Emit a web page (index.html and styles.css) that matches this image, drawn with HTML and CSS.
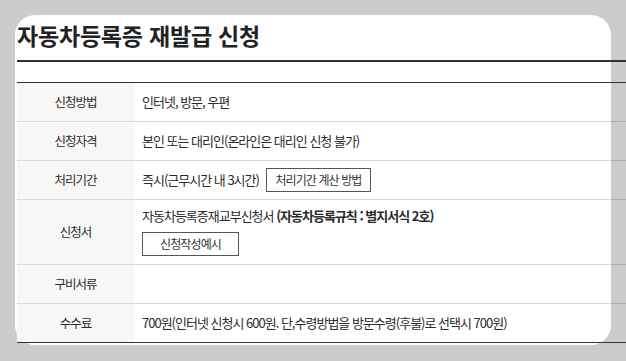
FILE: index.html
```html
<!DOCTYPE html>
<html lang="ko">
<head>
<meta charset="utf-8">
<title>자동차등록증 재발급 신청</title>
<link rel="stylesheet" href="styles.css">
</head>
<body>
  <div class="card">
    <h1 class="title">자동차등록증 재발급 신청</h1>
    <div class="sheet">
      <div class="grid">
        <div class="row">
          <div class="label">신청방법</div>
          <div class="value">인터넷, 방문, 우편</div>
        </div>
        <div class="row">
          <div class="label">신청자격</div>
          <div class="value">본인 또는 대리인(온라인은 대리인 신청 불가)</div>
        </div>
        <div class="row">
          <div class="label">처리기간</div>
          <div class="value">즉시(근무시간 내 3시간) <button class="btn btn-inline" type="button">처리기간 계산 방법</button></div>
        </div>
        <div class="row row-tall">
          <div class="label">신청서</div>
          <div class="value value-stack">
            <p class="line">자동차등록증재교부신청서 <strong>(자동차등록규칙 : 별지서식 2호)</strong></p>
            <button class="btn btn-block" type="button">신청작성예시</button>
          </div>
        </div>
        <div class="row">
          <div class="label">구비서류</div>
          <div class="value"></div>
        </div>
        <div class="row">
          <div class="label">수수료</div>
          <div class="value">700원(인터넷 신청시 600원. 단,수령방법을 방문수령(후불)로 선택시 700원)</div>
        </div>
      </div>
    </div>
  </div>
</body>
</html>
```
FILE: styles.css
```css
html, body {
  margin: 0;
  background: #cccccc;
  overflow: hidden;
}

body {
  padding: 15px;
  font-family: "Noto Sans CJK KR", "Noto Sans", sans-serif;
  color: #333;
}

.card {
  width: 596px;
  height: 330px;
  box-sizing: border-box;
  padding-left: 2px;
  background: #fff;
  border-radius: 20px;
}

.title {
  margin: 0 0 13px;
  padding-top: 8px;
  font-size: 23px;
  line-height: 24px;
  font-weight: 700;
  letter-spacing: -0.2px;
  color: #222;
}

/* the sheet runs wider than the card, past the window edge */
.sheet {
  width: 640px;
  border-top: 2px solid #333;
  padding-top: 20px;
}

.grid {
  border-top: 1px solid #333;
  border-bottom: 1px solid #333;
}

.row {
  display: flex;
  min-height: 39px;
  box-sizing: border-box;
  border-bottom: 1px solid rgba(0, 0, 0, 0.15);
  font-size: 13px;
  letter-spacing: -1px;
  line-height: 18px;
  color: #2b2b2b;
}

.row:last-child {
  border-bottom: 0;
  min-height: 38px;
}

.row-tall {
  min-height: 65px;
}

.label {
  flex: 0 0 117px;
  display: flex;
  align-items: center;
  justify-content: center;
  background: #f7f7f7;
  font-size: 12.5px;
  letter-spacing: -1px;
}

.value {
  flex: 1;
  display: flex;
  align-items: center;
  padding: 0 8px;
}

.value-stack {
  flex-direction: column;
  align-items: flex-start;
  justify-content: flex-start;
  padding-top: 7px;
}

.line {
  margin: 0 0 7px;
}

.line strong {
  font-weight: 700;
}

.btn {
  height: 24px;
  box-sizing: border-box;
  padding: 0;
  border: 1px solid #555;
  background: #fff;
  color: #333;
  font: inherit;
  font-size: 12px;
  letter-spacing: -0.9px;
  cursor: pointer;
}

.btn-inline {
  width: 105px;
  margin-left: 7px;
}

.btn-block {
  width: 97px;
}
```
